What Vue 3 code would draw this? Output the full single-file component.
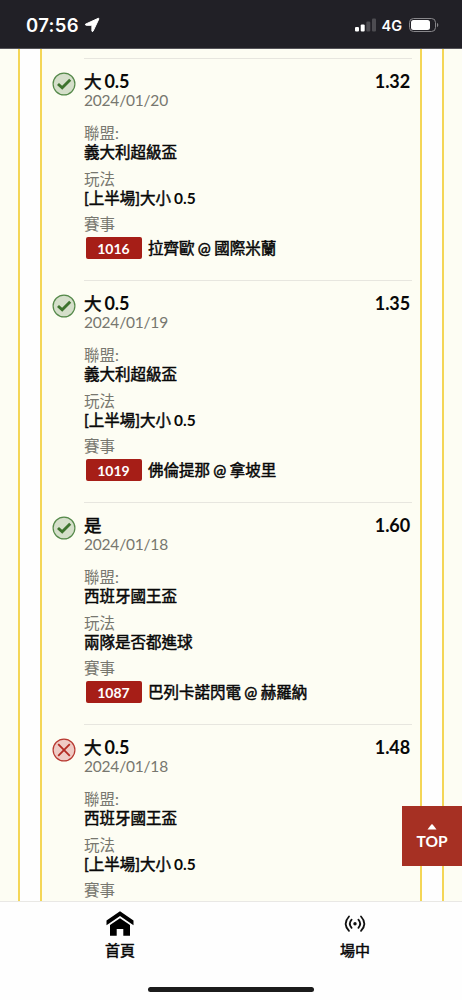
<script setup>
const bets = [
  { won: true, pick: '大', line: '0.5', date: '2024/01/20', odds: '1.32', league: '義大利超級盃', play: '[上半場]大小', code: '1016', match: '拉齊歐 @ 國際米蘭' },
  { won: true, pick: '大', line: '0.5', date: '2024/01/19', odds: '1.35', league: '義大利超級盃', play: '[上半場]大小', code: '1019', match: '佛倫提那 @ 拿坡里' },
  { won: true, pick: '是', line: '', date: '2024/01/18', odds: '1.60', league: '西班牙國王盃', play: '兩隊是否都進球', code: '1087', match: '巴列卡諾閃電 @ 赫羅納' },
  { won: false, pick: '大', line: '0.5', date: '2024/01/18', odds: '1.48', league: '西班牙國王盃', play: '[上半場]大小', code: '', match: '' },
]
</script>

<template>
  <div class="screen">
    <header class="status">
      <span class="time">07:56</span>
      <svg class="arrow" viewBox="0 0 16 16" width="16" height="16"><path d="M14.300 1.300 1.400 7.200Q1.300 8.300 2.200 8.300H7.200Q7.900 8.300 7.900 9V14Q8.200 15.100 9 14.300L14.900 1.900Q14.900 1.200 14.300 1.300Z" fill="#fff" stroke="#fff" stroke-width="1" stroke-linejoin="round" /></svg>
      <span class="spacer"></span>
      <svg class="signal" width="21" height="14" viewBox="0 0 21 14"><rect x="0" y="9" width="4" height="4.500" rx="1.100" fill="#fff" /><rect x="5.700" y="6.500" width="4" height="7" rx="1.100" fill="#fff" /><rect x="11.300" y="3.600" width="4" height="9.900" rx="1.100" fill="#4d4c51" /><rect x="17" y=".5" width="4" height="13" rx="1.100" fill="#4d4c51" /></svg>
      <span class="net">4G</span>
      <svg width="30" height="14" viewBox="0 0 30 14"><rect x=".5" y=".5" width="26" height="13" rx="4" fill="none" stroke="#88878b" /><rect x="2" y="2" width="19" height="10" rx="2.500" fill="#fff" /><path d="M28 4.800Q29.300 5.500 29.300 7T28 9.200Z" fill="#88878b" /></svg>
    </header>
    <main class="page">
      <div class="frame">
        <div class="list">
          <article v-for="(b, i) in bets" :key="i" class="bet">
            <svg class="mark" viewBox="0 0 24 24" width="24" height="24">
              <template v-if="b.won"><circle cx="12" cy="12" r="10.900" fill="#d5dfca" stroke="#55894a" stroke-width="1.200" /><path d="M6 12 10.200 15.800 18.200 7.800" fill="none" stroke="#3d732d" stroke-width="2.900" /></template>
              <template v-else><circle cx="12" cy="12" r="10.900" fill="#efcbc5" stroke="#b83a32" stroke-width="1.200" /><path d="M6.200 6.200 17.800 17.800M17.800 6.200 6.200 17.800" fill="none" stroke="#b32b22" stroke-width="1.800" /></template>
            </svg>
            <div class="body">
              <div class="head"><span>{{ b.pick }}<b v-if="b.line" class="num">{{ b.line }}</b></span><b>{{ b.odds }}</b></div>
              <div class="date">{{ b.date }}</div>
              <section><div class="label">聯盟:</div><div class="value">{{ b.league }}</div></section>
              <section><div class="label">玩法</div><div class="value">{{ b.play }}<b v-if="b.line" class="num">{{ b.line }}</b></div></section>
              <section><div class="label">賽事</div><div v-if="b.code" class="match"><span class="code">{{ b.code }}</span><span class="value">{{ b.match }}</span></div></section>
            </div>
          </article>
        </div>
      </div>
    </main>
    <button class="top"><svg width="10" height="6" viewBox="0 0 10 6"><path d="M.5 5.500 4.300.6Q5 0 5.700.6L9.500 5.500Z" fill="#fff" /></svg><span>TOP</span></button>
    <nav class="nav">
      <a class="tab"><svg width="28" height="26" viewBox="0 0 28 26"><path d="M.5 12.300V9.400L14 .3 27.500 9.400V14.200L14 5.100.5 14.200Z" fill="#000" /><path d="M4 14 14 7.300 24 14V24.700H17.300V18H10.700V24.700H4Z" fill="#000" /></svg><span>首頁</span></a>
      <a class="tab"><svg width="28" height="26" viewBox="0 0 28 26"><g fill="none" stroke="#111" stroke-width="1.800" stroke-linecap="round"><path d="M8 5.500Q1.400 12.700 8 19.900M20 5.500Q26.600 12.700 20 19.900M10.600 8.700Q7 12.800 10.600 16.900M17.400 8.700Q21 12.800 17.400 16.900" /></g><circle cx="14" cy="12.800" r="1.700" fill="#111" /></svg><span>場中</span></a>
      <div class="homebar"></div>
    </nav>
  </div>
</template>

<style scoped>
.screen { position: relative; width: 462px; height: 1000px; overflow: hidden; display: flex; flex-direction: column; background: #fdfdf3; color: #080808; font-family: Lato, "Noto Sans CJK TC", sans-serif; }
.status { box-sizing: border-box; height: 49px; flex: none; display: flex; align-items: center; padding: 2px 23px 0 26px; background: #212026; border-bottom: 1px solid #555459; color: #fff; font-family: Inter, sans-serif; font-weight: 600; }
.time { font-size: 18.500px; line-height: 24px; letter-spacing: .35px; width: 58px; }
.spacer { flex: 1; }
.net { font-size: 14.500px; margin: 1px 7px 0 5px; }
.page { flex: 1; min-height: 0; overflow: hidden; padding: 0 18px; }
.frame { height: 852px; border: solid #f4d657; border-width: 0 2px; background: #fefefe; padding: 0 20px; }
.list { box-sizing: border-box; height: 852px; border: solid #f4d657; border-width: 0 2px; background: #fdfdf3; padding: 9px 8px 0 10px; }
.bet { display: flex; height: 222px; }
.mark { flex: none; margin: 14px 8.500px 0 -.5px; }
.body { flex: 1; box-sizing: border-box; border-top: 1px solid #e7e6df; padding-top: 12px; }
.head { display: flex; justify-content: space-between; padding-right: 2px; height: 20px; line-height: 21px; font-size: 17.500px; font-weight: 400; -webkit-text-stroke: .6px; }
b { font-weight: 700; -webkit-text-stroke: 0; }
.head b { font-size: 18px; letter-spacing: -.1px; }
.num { margin-left: 3px; }
.date { height: 18px; line-height: 18px; font-size: 15.500px; letter-spacing: -.2px; color: #77776f; margin-bottom: 15px; }
section { height: 45.700px; font-size: 15.500px; line-height: 19px; }
.label { color: #77776f; }
.value { font-weight: 400; -webkit-text-stroke: .5px; }
.match { display: flex; align-items: center; height: 24px; margin-top: 2px; padding-left: 1.500px; }
.match .value { word-spacing: -.6px; }
.code { width: 56px; height: 22px; line-height: 23px; margin-right: 6.500px; border-radius: 2px; background: #a61e17; color: #fff; text-align: center; font-size: 14px; font-weight: 700; }
.top { position: absolute; right: 0; top: 806px; width: 60px; height: 60px; border: 0; padding: 2px 0 0; display: flex; flex-direction: column; align-items: center; justify-content: center; gap: 2px; background: #a63023; color: #fff; font: 700 15.500px/19px Lato, sans-serif; }
.nav { box-sizing: border-box; height: 99px; flex: none; position: relative; display: flex; border-top: 1px solid #e9e8e5; background: #fefefe; padding: 9px 0 0 2.500px; }
.tab { flex: none; width: 235px; display: flex; flex-direction: column; align-items: center; gap: 3px; font-size: 15px; line-height: 20px; font-weight: 400; -webkit-text-stroke: .5px; }
.homebar { position: absolute; left: 148px; top: 85px; width: 166px; height: 5px; border-radius: 3px; background: #1b1b1b; }
</style>
